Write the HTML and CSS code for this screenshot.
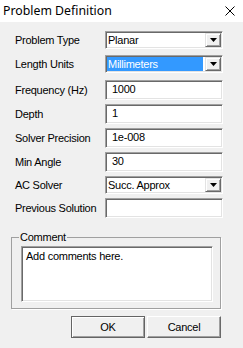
FILE: index.html
```html
<!DOCTYPE html>
<html>
<head>
<meta charset="utf-8">
<link rel="stylesheet" href="styles.css">
</head>
<body>
<div class="window">
  <div class="titlebar">
    <span class="title">Problem Definition</span>
    <svg class="close" width="10" height="10" viewBox="0 0 10 10"><path d="M0.5 0.5 L9.5 9.5 M9.5 0.5 L0.5 9.5" stroke="#000" stroke-width="1" fill="none"/></svg>
  </div>
  <div class="content">
    <div class="form">
      <div class="row row-first">
        <span class="label">Problem Type</span>
        <div class="combo"><span class="value">Planar</span><span class="dd"><svg width="7" height="4" viewBox="0 0 7 4"><path d="M0 0H7L3.5 4Z" fill="#000"/></svg></span></div>
      </div>
      <div class="row row-second">
        <span class="label">Length Units</span>
        <div class="combo"><span class="value selected">Millimeters</span><span class="dd"><svg width="7" height="4" viewBox="0 0 7 4"><path d="M0 0H7L3.5 4Z" fill="#000"/></svg></span></div>
      </div>
      <div class="row">
        <span class="label">Frequency (Hz)</span>
        <div class="textbox">1000</div>
      </div>
      <div class="row">
        <span class="label">Depth</span>
        <div class="textbox">1</div>
      </div>
      <div class="row">
        <span class="label">Solver Precision</span>
        <div class="textbox">1e-008</div>
      </div>
      <div class="row">
        <span class="label">Min Angle</span>
        <div class="textbox">30</div>
      </div>
      <div class="row">
        <span class="label">AC Solver</span>
        <div class="combo"><span class="value">Succ. Approx</span><span class="dd"><svg width="7" height="4" viewBox="0 0 7 4"><path d="M0 0H7L3.5 4Z" fill="#000"/></svg></span></div>
      </div>
      <div class="row">
        <span class="label">Previous Solution</span>
        <div class="textbox"></div>
      </div>
    </div>
    <fieldset class="group">
      <legend>Comment</legend>
      <div class="textarea">Add comments here.</div>
    </fieldset>
    <div class="buttons">
      <div class="button default">OK</div>
      <div class="button">Cancel</div>
    </div>
  </div>
</div>
</body>
</html>
```

FILE: styles.css
```css
html, body {
  margin: 0;
  padding: 0;
}
body {
  width: 243px;
  height: 348px;
  background: #f0f0f0;
  font-family: "Liberation Sans", Arial, sans-serif;
  font-size: 11px;
  letter-spacing: -0.25px;
  color: #000;
  overflow: hidden;
}
.titlebar {
  height: 22px;
  background: #fff;
  display: flex;
  align-items: center;
  justify-content: space-between;
  padding: 0 8px 0 3px;
}
.title {
  font-family: "Noto Sans", sans-serif;
  font-size: 12.3px;
  letter-spacing: 0;
  line-height: 22px;
}
.close {
  display: block;
}
.content {
  padding-top: 9px;
}
.form {
  display: flex;
  flex-direction: column;
  gap: 4px;
  padding-left: 15px;
}
.row {
  display: flex;
  align-items: center;
}
.row-first {
  margin-bottom: 2px;
}
.row-second {
  margin-bottom: 3px;
}
.label {
  width: 90px;
  line-height: 13px;
}
.combo, .textbox, .textarea {
  box-sizing: border-box;
  background: #fff;
  border-top: 1px solid #a0a0a0;
  border-left: 1px solid #a0a0a0;
  border-bottom: 1px solid #fff;
  border-right: 1px solid #fff;
  box-shadow: inset 1px 1px 0 #696969, inset -1px -1px 0 #e3e3e3;
}
.combo {
  width: 118px;
  height: 18px;
  display: flex;
  padding: 1px;
}
.value {
  flex: 1;
  padding-left: 1px;
  margin-right: 2px;
  line-height: 14px;
}
.value.selected {
  background: #3399ff;
  color: #fff;
}
.dd {
  box-sizing: border-box;
  width: 16px;
  height: 14px;
  background: #f0f0f0;
  border-top: 1px solid #e3e3e3;
  border-left: 1px solid #e3e3e3;
  border-bottom: 1px solid #696969;
  border-right: 1px solid #696969;
  box-shadow: inset 1px 1px 0 #fff, inset -1px -1px 0 #a0a0a0;
  display: flex;
  align-items: center;
  justify-content: center;
}
.dd svg {
  display: block;
  margin-left: 1px;
}
.textbox {
  width: 118px;
  height: 20px;
  padding-left: 6px;
  line-height: 17px;
}
.group {
  box-sizing: border-box;
  width: 210px;
  margin: 13px 0 0 11px;
  padding: 0 0 6px 7px;
  border: 1px solid #a0a0a0;
  box-shadow: 1px 1px 0 #fff;
}
.group legend {
  padding: 0 1px;
  line-height: 13px;
}
.textarea {
  width: 192px;
  height: 56px;
  margin: 2px 0 0 2px;
  padding: 3px 4px;
  line-height: 13px;
}
.buttons {
  display: flex;
  justify-content: flex-end;
  gap: 2px;
  margin-top: 7px;
  padding-right: 22px;
}
.button {
  box-sizing: border-box;
  width: 74px;
  height: 22px;
  background: #f0f0f0;
  border-top: 1px solid #fff;
  border-left: 1px solid #fff;
  border-bottom: 1px solid #696969;
  border-right: 1px solid #696969;
  box-shadow: inset -1px -1px 0 #a0a0a0;
  text-align: center;
  line-height: 20px;
}
.button.default {
  border: 1px solid #646464;
  box-shadow: inset 1px 1px 0 #fff, inset -1px -1px 0 #a0a0a0;
}
```
